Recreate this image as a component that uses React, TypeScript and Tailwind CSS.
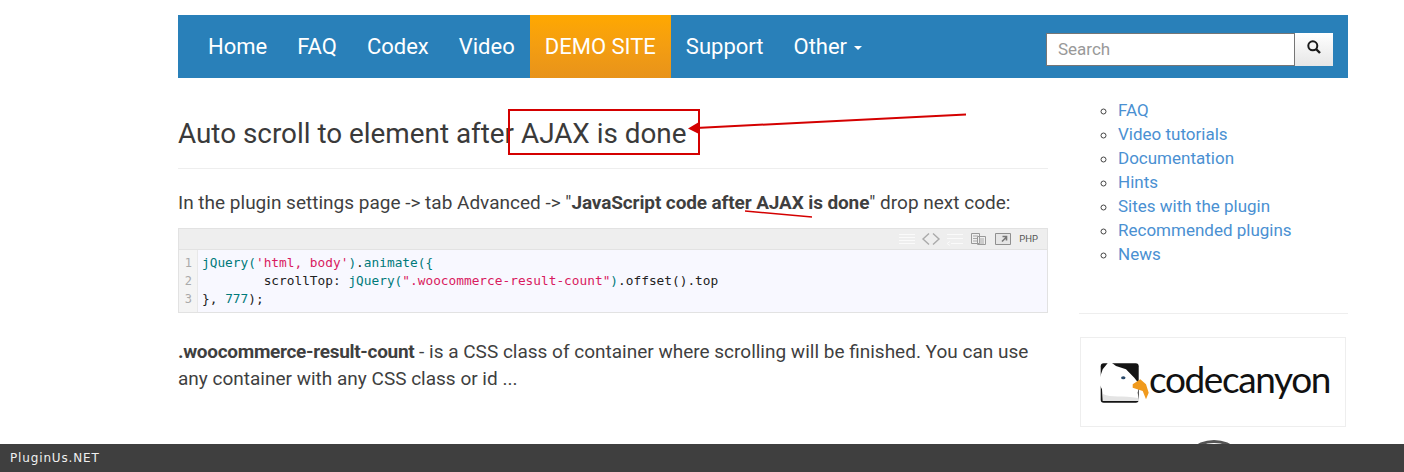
const navItems = ["Home", "FAQ", "Codex", "Video"];
const sideLinks = [
  "FAQ",
  "Video tutorials",
  "Documentation",
  "Hints",
  "Sites with the plugin",
  "Recommended plugins",
  "News",
];

const NavLink = ({ label }: { label: string }) => (
  <a className="flex h-full items-center px-[15px] text-[22px] text-white">{label}</a>
);

const CodeToolbar = () => (
  <div className="flex h-[21px] items-center justify-end border-b border-[#e2e2e2] bg-[#eeeeee] pr-[9px]">
    <svg width="113" height="14" viewBox="0 0 113 14" fill="none" className="mr-[8px]">
      {/* view source lines */}
      <path d="M1 2.5h16M1 5.5h16M1 8.5h16M1 11.5h16" stroke="#fafafa" />
      {/* code brackets */}
      <path d="M31 1.500L25 7l6 5.500M35 1.500L41 7l-6 5.500" stroke="#aaaaaa" strokeWidth="1.400" />
      {/* wrap */}
      <path d="M49 2.500h16M49 6.500h16M53 11.500h12M49 11.500l3-2M49 11.500l3 2" stroke="#fafafa" />
      {/* copy */}
      <path d="M73.500 1.500h8v10h-8zM79.500 4.500h8v8h-8z" stroke="#999999" fill="#f0f0f0" />
      <path d="M75 4h5M75 6.500h4M75 9h4M81 7h5M81 9h5M81 11h5" stroke="#a8a8a8" />
      {/* popup */}
      <path d="M97.500 1.500h15v11h-15z" stroke="#8f8f8f" fill="#e6e6e6" />
      <path d="M104 9.500l4-4M104.500 4.500h4v4" stroke="#777777" strokeWidth="1.600" />
    </svg>
    <span className="font-['Roboto',sans-serif] text-[9.500px] text-[#555555]">PHP</span>
  </div>
);

const CodeBlock = () => (
  <div className="mt-[12px] border border-[#e2e2e2] bg-[#f8f8ff]">
    <CodeToolbar />
    <div className="flex h-[62px] font-['DejaVu_Sans_Mono',monospace] text-[12.800px] leading-[18px]">
      <div className="w-[19px] shrink-0 border-r border-[#e8e8e8] bg-[#f4f4f4] pt-[4px] pr-[5px] text-right text-[12px] text-[#aaaaaa]">
        <div>1</div>
        <div>2</div>
        <div>3</div>
      </div>
      <pre className="pt-[4px] pl-[4px] font-['DejaVu_Sans_Mono',monospace] text-[#222222]">
        <div>
          <span className="text-[#007a7a]">jQuery(</span>
          <span className="text-[#d81b60]">'html, body'</span>
          <span className="text-[#007a7a]">)</span>.
          <span className="text-[#007a7a]">animate(</span>
          <span className="text-[#007a7a]">{"{"}</span>
        </div>
        <div>
          {"        scrollTop: "}
          <span className="text-[#007a7a]">jQuery(</span>
          <span className="text-[#d81b60]">".woocommerce-result-count"</span>
          <span className="text-[#007a7a]">)</span>.offset().top
        </div>
        <div>
          {"}, "}
          <span className="text-[#007a7a]">777</span>);
        </div>
      </pre>
    </div>
  </div>
);

const CodeCanyonLogo = () => (
  <div className="mt-[23px] mr-[2px] ml-[1px] flex h-[90px] items-center border border-[#eeeeee] pl-[18px]">
    <svg width="52" height="44" viewBox="0 0 52 44" className="shrink-0">
      <rect x="1.700" y="3.300" width="38" height="39.400" rx="3" fill="#141414" />
      <path
        d="M0.300 19.300L3.700 9.300L7 5.300L10.300 1L17 6L27 9.300L35.300 17.700L40.300 24.300L38.700 32.700L40 41H3.700L3 29.300L-0.300 22.700Z"
        fill="#ffffff"
      />
      <path d="M4 41L4 34C12 38 24 35 39 38L40 41Z" fill="#e4e4e4" />
      <ellipse cx="24.300" cy="17.700" rx="2.200" ry="1.500" fill="#2a4a6a" />
      <path d="M33.700 24.300L41.300 19.300L47 24.300L49.700 32.700L47 39.300L43.700 31L33.700 27.700Z" fill="#f09a1d" />
    </svg>
    <span className="mb-[8px] -ml-[2px] font-['Lato',sans-serif] text-[37px] leading-none tracking-[-1.400px] text-[#111111]">
      codecanyon
    </span>
  </div>
);

export default function App() {
  return (
    <div className="relative h-[472px] overflow-hidden bg-white font-['Roboto',sans-serif] text-[#3f3f3f]">
      <div className="ml-[178px] w-[1170px] pt-[15px]">
        <nav className="flex h-[63px] items-center justify-between bg-[#2980b9] pr-[15px] pl-[15px]">
          <div className="flex h-full items-center">
            {navItems.map((item) => (
              <NavLink key={item} label={item} />
            ))}
            <a className="flex h-full items-center bg-gradient-to-b from-[#ffa800] to-[#e8931a] px-[15px] text-[22px] text-white">
              DEMO SITE
            </a>
            <NavLink label="Support" />
            <a className="flex h-full items-center px-[15px] text-[22px] text-white">
              Other
              <span className="mt-[2px] ml-[7px] border-x-[4px] border-t-[4px] border-x-transparent border-t-white" />
            </a>
          </div>
          <div className="mt-[5px] flex h-[33px] w-[287px]">
            <input
              readOnly
              placeholder="Search"
              className="h-full min-w-0 flex-1 border border-[#767676] bg-white px-[11px] text-[17px] placeholder:text-[#999999]"
            />
            <button className="flex h-full w-[38px] items-center justify-center bg-gradient-to-b from-white to-[#e6e6e6] pb-[5px]">
              <svg width="14" height="14" viewBox="0 0 14 14" fill="none">
                <circle cx="5.800" cy="5.800" r="4.500" stroke="#1a1a1a" strokeWidth="2" />
                <path d="M9 9l4 4" stroke="#1a1a1a" strokeWidth="2.400" />
              </svg>
            </button>
          </div>
        </nav>

        <div className="flex justify-between">
          <main className="w-[870px]">
            <h2 className="mt-[39px] border-b border-[#eeeeee] pb-[18px] text-[27.850px] leading-[33px] text-[#3a3a3a]">
              Auto scroll to element after AJAX is done
            </h2>
            <p className="mt-[20px] text-[19px] leading-[27px]">
              In the plugin settings page -&gt; tab Advanced -&gt; "<b className="tracking-[-0.120px]">JavaScript code after AJAX is done</b>" drop next code:
            </p>
            <CodeBlock />
            <p className="mt-[25px] text-[19px] leading-[27px]">
              <b className="tracking-[-0.300px]">.woocommerce-result-count</b> - is a CSS class of container where scrolling will be finished. You can use any container with any CSS class or id ...
            </p>
          </main>

          <aside className="w-[269px]">
            <ul className="mt-[20px] list-[circle] border-b border-[#eeeeee] pb-[47px] pl-[39px] text-[17px] leading-[24px] text-[#4a90d2] marker:text-[#444444]">
              {sideLinks.map((link) => (
                <li key={link}>{link}</li>
              ))}
            </ul>
            <CodeCanyonLogo />
            <div className="mx-auto mt-[13px] h-[70px] w-[70px] rounded-full border-[3px] border-[#555555]" />
          </aside>
        </div>
      </div>

      {/* red annotations drawn over the page */}
      <div className="absolute top-[109px] left-[508px] h-[46px] w-[192px] border-2 border-[#d40000]" />
      <svg className="absolute top-0 left-0" width="1404" height="472" fill="none">
        <path d="M966 114.500L696 128" stroke="#d40000" strokeWidth="2" />
        <path d="M688 128.500L699 122V134Z" fill="#d40000" />
        <path d="M745 211L812 217" stroke="#d40000" strokeWidth="1.500" />
      </svg>

      <div className="absolute right-0 bottom-0 left-0 flex h-[28px] items-center bg-[#3f3f3f] pl-[10px] font-['DejaVu_Sans',sans-serif] text-[12px] tracking-[0.850px] text-[#f0f0f0]">
        PluginUs.NET
      </div>
    </div>
  );
}
